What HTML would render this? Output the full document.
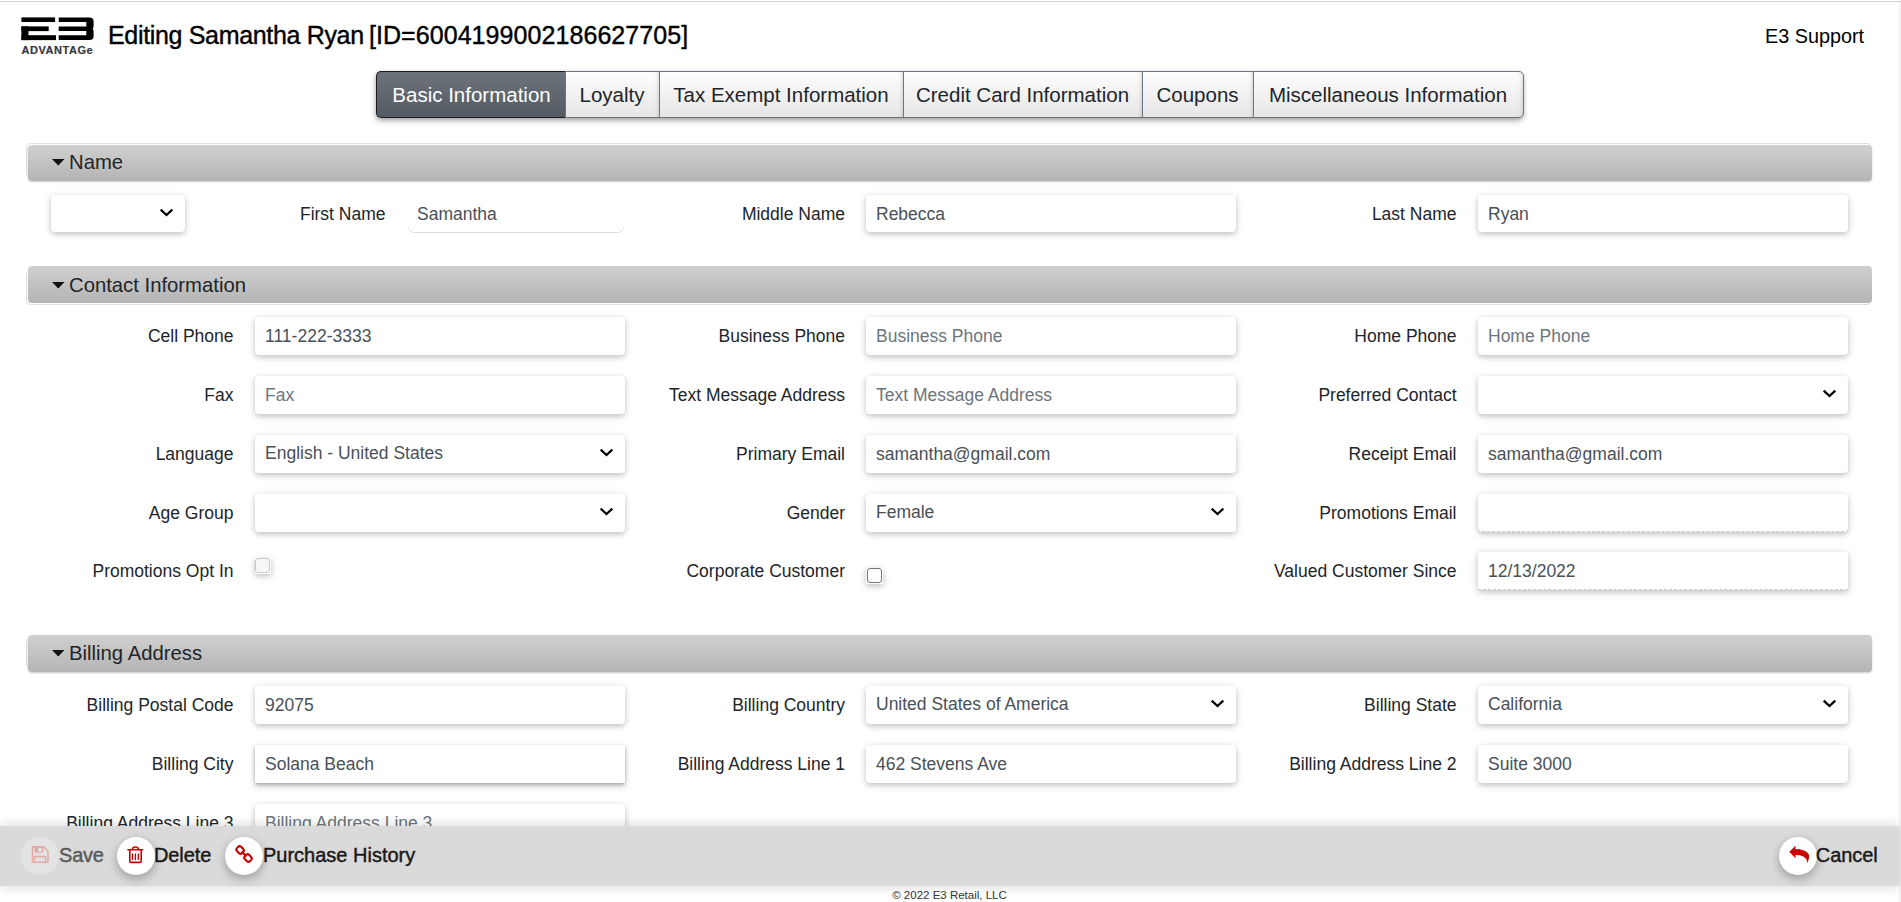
<!DOCTYPE html>
<html><head><meta charset="utf-8"><style>
*{box-sizing:border-box;margin:0;padding:0}
html,body{width:1901px;height:902px;overflow:hidden;background:#fff;font-family:"Liberation Sans", sans-serif}
.t{position:absolute;white-space:nowrap}
.abs{position:absolute}
.hdr{position:absolute;left:28px;width:1844px;border-radius:4px;
 background:linear-gradient(#d0d0d0,#b4b4b4);box-shadow:0 1px 2px rgba(0,0,0,.22)}
.inp{position:absolute;height:38px;width:370px;background:#fff;border-radius:4px;
 box-shadow:0 2px 5px 0 rgba(0,0,0,.16),0 2px 10px 0 rgba(0,0,0,.12)}
.chev{position:absolute;width:14px;height:9px}
.circ{position:absolute;width:38px;height:38px;border-radius:50%;background:#fff;
 box-shadow:0 4px 8px 0 rgba(0,0,0,.18),0 3px 12px 0 rgba(0,0,0,.12)}
</style></head>
<body>
<div class="abs" style="left:0;top:1px;width:1901px;height:1px;background:#cfd1d1"></div>
<div class="abs" style="left:1899px;top:2px;width:2px;height:900px;background:#f1f1f1"></div>
<svg class="abs" style="left:0;top:0" width="100" height="60" viewBox="0 0 100 60">
<g fill="#000">
<rect x="21.4" y="17.4" width="33.7" height="4.6"/>
<rect x="21.4" y="26.4" width="27.3" height="4.7"/>
<rect x="21.4" y="26.4" width="7.1" height="13.7"/>
<rect x="21.4" y="35.2" width="34.6" height="4.9"/>
<path d="M58.7 17.4 H89.6 Q93.6 17.4 93.6 21.4 V25.5 Q93.6 28.5 92.6 28.7 Q93.6 29 93.6 32 V36.1 Q93.6 40.1 89.6 40.1 H58.7 V35.2 H86.3 V31.1 H58.7 V26.4 H86.3 V22 H58.7 Z"/>
</g></svg>
<div class="t" style="left:21.5px;top:44.69px;font-size:11px;line-height:11px;color:#383838;font-weight:700;letter-spacing:0.55px;-webkit-text-stroke:0.2px #383838;">ADVANTAG<span style="font-size:11px">e</span></div>
<div class="t" style="left:108px;top:23.24px;font-size:25px;line-height:25px;color:#000;font-weight:400;letter-spacing:0px;-webkit-text-stroke:0.4px #000;"><span style="letter-spacing:-0.33px">Editing Samantha Ryan</span> <span style="letter-spacing:0.07px;margin-left:-1.8px">[ID=6004199002186627705]</span></div>
<div class="t" style="right:37px;top:27.24px;font-size:19.8px;line-height:19.8px;color:#000;font-weight:400;letter-spacing:0px;">E3 Support</div>
<div class="abs" style="left:376px;top:71px;width:1147px;height:47px;border-radius:5px;box-shadow:0 2px 5px rgba(0,0,0,.33),0 4px 9px rgba(0,0,0,.1)"></div>
<div class="abs" style="left:376px;top:71px;width:190px;height:47px;background:linear-gradient(#6c737a,#535a61);border:1.5px solid #1c1c1c;border-right:none;border-radius:5px 0 0 5px"></div>
<div class="abs" style="left:565px;top:71px;width:94px;height:47px;background:linear-gradient(#fdfdfd,#e6e6e6);border-top:1px solid #6c757d;border-bottom:1px solid #6c757d;border-left:1px solid #6c757d;border-radius:0;box-shadow:inset -4px 0 5px -4px rgba(0,0,0,.2)"></div>
<div class="abs" style="left:659px;top:71px;width:244px;height:47px;background:linear-gradient(#fdfdfd,#e6e6e6);border-top:1px solid #6c757d;border-bottom:1px solid #6c757d;border-left:1px solid #6c757d;border-radius:0;box-shadow:inset -4px 0 5px -4px rgba(0,0,0,.2)"></div>
<div class="abs" style="left:903px;top:71px;width:239px;height:47px;background:linear-gradient(#fdfdfd,#e6e6e6);border-top:1px solid #6c757d;border-bottom:1px solid #6c757d;border-left:1px solid #6c757d;border-radius:0;box-shadow:inset -4px 0 5px -4px rgba(0,0,0,.2)"></div>
<div class="abs" style="left:1142px;top:71px;width:111px;height:47px;background:linear-gradient(#fdfdfd,#e6e6e6);border-top:1px solid #6c757d;border-bottom:1px solid #6c757d;border-left:1px solid #6c757d;border-radius:0;box-shadow:inset -4px 0 5px -4px rgba(0,0,0,.2)"></div>
<div class="abs" style="left:1253px;top:71px;width:271px;height:47px;background:linear-gradient(#fdfdfd,#e6e6e6);border-top:1px solid #6c757d;border-bottom:1px solid #6c757d;border-left:1px solid #6c757d;border-right:1px solid #6c757d;border-radius:0 5px 5px 0;box-shadow:inset -4px 0 5px -4px rgba(0,0,0,.2)"></div>
<div class="t" style="left:377px;width:189px;text-align:center;top:85.37px;font-size:20.5px;line-height:20px;color:#fff">Basic Information</div>
<div class="t" style="left:565px;width:94px;text-align:center;top:85.37px;font-size:20.5px;line-height:20px;color:#212529">Loyalty</div>
<div class="t" style="left:659px;width:244px;text-align:center;top:85.37px;font-size:20.5px;line-height:20px;color:#212529">Tax Exempt Information</div>
<div class="t" style="left:903px;width:239px;text-align:center;top:85.37px;font-size:20.5px;line-height:20px;color:#212529">Credit Card Information</div>
<div class="t" style="left:1142px;width:111px;text-align:center;top:85.37px;font-size:20.5px;line-height:20px;color:#212529">Coupons</div>
<div class="t" style="left:1253px;width:270px;text-align:center;top:85.37px;font-size:20.5px;line-height:20px;color:#212529">Miscellaneous Information</div>
<div class="abs" style="left:26px;top:143px;width:1846px;height:35px;border-radius:5px;border-left:1px solid #dedede;border-top:1px solid #dedede;background:#fff"></div>
<div class="hdr" style="top:145px;height:36px;"></div>
<svg class="abs" style="left:52px;top:159px" width="13" height="7" viewBox="0 0 13 7"><path d="M0 0H12.5L6.25 6.5Z" fill="#111"/></svg>
<div class="t" style="left:69px;top:151.82px;font-size:20.3px;line-height:20.3px;color:#212529;font-weight:400;letter-spacing:0px;">Name</div>
<div class="abs" style="left:26px;top:269px;width:1846px;height:36px;border-radius:5px;border-left:1px solid #dedede;border-bottom:1px solid #dedede;background:#fff"></div>
<div class="hdr" style="top:266px;height:37px;box-shadow:none;"></div>
<svg class="abs" style="left:52px;top:282px" width="13" height="7" viewBox="0 0 13 7"><path d="M0 0H12.5L6.25 6.5Z" fill="#111"/></svg>
<div class="t" style="left:69px;top:274.82px;font-size:20.3px;line-height:20.3px;color:#212529;font-weight:400;letter-spacing:0px;">Contact Information</div>
<div class="abs" style="left:26px;top:638px;width:1846px;height:31px;border-radius:5px;border-left:1px solid #dedede;background:#fff"></div>
<div class="hdr" style="top:635px;height:37px;"></div>
<svg class="abs" style="left:52px;top:650px" width="13" height="7" viewBox="0 0 13 7"><path d="M0 0H12.5L6.25 6.5Z" fill="#111"/></svg>
<div class="t" style="left:69px;top:642.82px;font-size:20.3px;line-height:20.3px;color:#212529;font-weight:400;letter-spacing:0px;">Billing Address</div>
<div class="inp" style="left:51px;top:195px;width:134px;height:37px"></div>
<svg class="abs" style="left:158px;top:205px" width="18" height="16" viewBox="0 0 18 16"><path d="M2.7 4.7L8.5 10.0L14.3 4.7" fill="none" stroke="#000" stroke-width="2.3" stroke-linecap="butt" stroke-linejoin="miter"/></svg>
<div class="t" style="right:1515.5px;top:206.19px;font-size:17.5px;line-height:17.5px;color:#212529;font-weight:400;letter-spacing:0px;">First Name</div>
<div class="abs" style="left:408px;top:195px;width:216px;height:37px;border-radius:6px;box-shadow:0 1px 0 #dcdcdc"></div>
<div class="t" style="left:417px;top:206.19px;font-size:17.5px;line-height:17.5px;color:#495057;font-weight:400;letter-spacing:0px;">Samantha</div>
<div class="t" style="right:1056px;top:206.19px;font-size:17.5px;line-height:17.5px;color:#212529;font-weight:400;letter-spacing:0px;">Middle Name</div>
<div class="inp" style="left:866px;top:195px;height:37px;"></div>
<div class="t" style="left:876px;top:206.19px;font-size:17.5px;line-height:17.5px;color:#495057;font-weight:400;letter-spacing:0px;">Rebecca</div>
<div class="t" style="right:444.5px;top:206.19px;font-size:17.5px;line-height:17.5px;color:#212529;font-weight:400;letter-spacing:0px;">Last Name</div>
<div class="inp" style="left:1478px;top:195px;height:37px;"></div>
<div class="t" style="left:1488px;top:206.19px;font-size:17.5px;line-height:17.5px;color:#495057;font-weight:400;letter-spacing:0px;">Ryan</div>
<div class="t" style="right:1667.5px;top:328.19px;font-size:17.5px;line-height:17.5px;color:#212529;font-weight:400;letter-spacing:0px;">Cell Phone</div>
<div class="inp" style="left:255px;top:317px;height:38px;"></div>
<div class="t" style="left:265px;top:328.19px;font-size:17.5px;line-height:17.5px;color:#495057;font-weight:400;letter-spacing:0px;">111-222-3333</div>
<div class="t" style="right:1056px;top:328.19px;font-size:17.5px;line-height:17.5px;color:#212529;font-weight:400;letter-spacing:0px;">Business Phone</div>
<div class="inp" style="left:866px;top:317px;height:38px;"></div>
<div class="t" style="left:876px;top:328.19px;font-size:17.5px;line-height:17.5px;color:#6c757d;font-weight:400;letter-spacing:0px;">Business Phone</div>
<div class="t" style="right:444.5px;top:328.19px;font-size:17.5px;line-height:17.5px;color:#212529;font-weight:400;letter-spacing:0px;">Home Phone</div>
<div class="inp" style="left:1478px;top:317px;height:38px;"></div>
<div class="t" style="left:1488px;top:328.19px;font-size:17.5px;line-height:17.5px;color:#6c757d;font-weight:400;letter-spacing:0px;">Home Phone</div>
<div class="t" style="right:1667.5px;top:387.19px;font-size:17.5px;line-height:17.5px;color:#212529;font-weight:400;letter-spacing:0px;">Fax</div>
<div class="inp" style="left:255px;top:376px;height:38px;"></div>
<div class="t" style="left:265px;top:387.19px;font-size:17.5px;line-height:17.5px;color:#6c757d;font-weight:400;letter-spacing:0px;">Fax</div>
<div class="t" style="right:1056px;top:387.19px;font-size:17.5px;line-height:17.5px;color:#212529;font-weight:400;letter-spacing:0px;">Text Message Address</div>
<div class="inp" style="left:866px;top:376px;height:38px;"></div>
<div class="t" style="left:876px;top:387.19px;font-size:17.5px;line-height:17.5px;color:#6c757d;font-weight:400;letter-spacing:0px;">Text Message Address</div>
<div class="t" style="right:444.5px;top:387.19px;font-size:17.5px;line-height:17.5px;color:#212529;font-weight:400;letter-spacing:0px;">Preferred Contact</div>
<div class="inp" style="left:1478px;top:376px;height:38px;"></div>
<svg class="abs" style="left:1821px;top:386px" width="18" height="16" viewBox="0 0 18 16"><path d="M2.7 4.7L8.5 10.0L14.3 4.7" fill="none" stroke="#000" stroke-width="2.3" stroke-linecap="butt" stroke-linejoin="miter"/></svg>
<div class="t" style="right:1667.5px;top:446.19px;font-size:17.5px;line-height:17.5px;color:#212529;font-weight:400;letter-spacing:0px;">Language</div>
<div class="inp" style="left:255px;top:435px;height:38px;"></div>
<div class="t" style="left:265px;top:445.19px;font-size:17.5px;line-height:17.5px;color:#495057;font-weight:400;letter-spacing:0px;">English - United States</div>
<svg class="abs" style="left:598px;top:445px" width="18" height="16" viewBox="0 0 18 16"><path d="M2.7 4.7L8.5 10.0L14.3 4.7" fill="none" stroke="#000" stroke-width="2.3" stroke-linecap="butt" stroke-linejoin="miter"/></svg>
<div class="t" style="right:1056px;top:446.19px;font-size:17.5px;line-height:17.5px;color:#212529;font-weight:400;letter-spacing:0px;">Primary Email</div>
<div class="inp" style="left:866px;top:435px;height:38px;"></div>
<div class="t" style="left:876px;top:446.19px;font-size:17.5px;line-height:17.5px;color:#495057;font-weight:400;letter-spacing:0px;">samantha@gmail.com</div>
<div class="t" style="right:444.5px;top:446.19px;font-size:17.5px;line-height:17.5px;color:#212529;font-weight:400;letter-spacing:0px;">Receipt Email</div>
<div class="inp" style="left:1478px;top:435px;height:38px;"></div>
<div class="t" style="left:1488px;top:446.19px;font-size:17.5px;line-height:17.5px;color:#495057;font-weight:400;letter-spacing:0px;">samantha@gmail.com</div>
<div class="t" style="right:1667.5px;top:505.19px;font-size:17.5px;line-height:17.5px;color:#212529;font-weight:400;letter-spacing:0px;">Age Group</div>
<div class="inp" style="left:255px;top:494px;height:38px;"></div>
<svg class="abs" style="left:598px;top:504px" width="18" height="16" viewBox="0 0 18 16"><path d="M2.7 4.7L8.5 10.0L14.3 4.7" fill="none" stroke="#000" stroke-width="2.3" stroke-linecap="butt" stroke-linejoin="miter"/></svg>
<div class="t" style="right:1056px;top:505.19px;font-size:17.5px;line-height:17.5px;color:#212529;font-weight:400;letter-spacing:0px;">Gender</div>
<div class="inp" style="left:866px;top:494px;height:38px;"></div>
<div class="t" style="left:876px;top:504.19px;font-size:17.5px;line-height:17.5px;color:#495057;font-weight:400;letter-spacing:0px;">Female</div>
<svg class="abs" style="left:1209px;top:504px" width="18" height="16" viewBox="0 0 18 16"><path d="M2.7 4.7L8.5 10.0L14.3 4.7" fill="none" stroke="#000" stroke-width="2.3" stroke-linecap="butt" stroke-linejoin="miter"/></svg>
<div class="t" style="right:444.5px;top:505.19px;font-size:17.5px;line-height:17.5px;color:#212529;font-weight:400;letter-spacing:0px;">Promotions Email</div>
<div class="inp" style="left:1478px;top:494px;height:38px;border-bottom:1px dashed #ccc;"></div>
<div class="t" style="right:1667.5px;top:563.19px;font-size:17.5px;line-height:17.5px;color:#212529;font-weight:400;letter-spacing:0px;">Promotions Opt In</div>
<div class="abs" style="left:255px;top:558px;width:16px;height:16px;background:#fff;box-shadow:0 2px 5px 0 rgba(0,0,0,.16),0 2px 10px 0 rgba(0,0,0,.12)"><div class="abs" style="left:0;top:0;width:15px;height:15px;border:1px solid #c6c6c6;border-radius:3px;background:#f6f6f6"></div></div>
<div class="t" style="right:1056px;top:563.19px;font-size:17.5px;line-height:17.5px;color:#212529;font-weight:400;letter-spacing:0px;">Corporate Customer</div>
<div class="abs" style="left:866px;top:568px;width:17px;height:16px;background:#fff;box-shadow:0 2px 5px 0 rgba(0,0,0,.16),0 2px 10px 0 rgba(0,0,0,.12)"><div class="abs" style="left:1px;top:0;width:15px;height:15px;border:1.3px solid #777;border-radius:3px;background:#fff"></div></div>
<div class="t" style="right:444.5px;top:563.19px;font-size:17.5px;line-height:17.5px;color:#212529;font-weight:400;letter-spacing:0px;">Valued Customer Since</div>
<div class="inp" style="left:1478px;top:552px;height:38px;border-bottom:1px dashed #ccc;border-radius:0;"></div>
<div class="t" style="left:1488px;top:563.19px;font-size:17.5px;line-height:17.5px;color:#495057;font-weight:400;letter-spacing:0px;">12/13/2022</div>
<div class="t" style="right:1667.5px;top:697.19px;font-size:17.5px;line-height:17.5px;color:#212529;font-weight:400;letter-spacing:0px;">Billing Postal Code</div>
<div class="inp" style="left:255px;top:686px;height:38px;"></div>
<div class="t" style="left:265px;top:697.19px;font-size:17.5px;line-height:17.5px;color:#495057;font-weight:400;letter-spacing:0px;">92075</div>
<div class="t" style="right:1056px;top:697.19px;font-size:17.5px;line-height:17.5px;color:#212529;font-weight:400;letter-spacing:0px;">Billing Country</div>
<div class="inp" style="left:866px;top:686px;height:38px;"></div>
<div class="t" style="left:876px;top:696.19px;font-size:17.5px;line-height:17.5px;color:#495057;font-weight:400;letter-spacing:0px;">United States of America</div>
<svg class="abs" style="left:1209px;top:696px" width="18" height="16" viewBox="0 0 18 16"><path d="M2.7 4.7L8.5 10.0L14.3 4.7" fill="none" stroke="#000" stroke-width="2.3" stroke-linecap="butt" stroke-linejoin="miter"/></svg>
<div class="t" style="right:444.5px;top:697.19px;font-size:17.5px;line-height:17.5px;color:#212529;font-weight:400;letter-spacing:0px;">Billing State</div>
<div class="inp" style="left:1478px;top:686px;height:38px;"></div>
<div class="t" style="left:1488px;top:696.19px;font-size:17.5px;line-height:17.5px;color:#495057;font-weight:400;letter-spacing:0px;">California</div>
<svg class="abs" style="left:1821px;top:696px" width="18" height="16" viewBox="0 0 18 16"><path d="M2.7 4.7L8.5 10.0L14.3 4.7" fill="none" stroke="#000" stroke-width="2.3" stroke-linecap="butt" stroke-linejoin="miter"/></svg>
<div class="t" style="right:1667.5px;top:756.19px;font-size:17.5px;line-height:17.5px;color:#212529;font-weight:400;letter-spacing:0px;">Billing City</div>
<div class="inp" style="left:255px;top:745px;height:38px;border-radius:0;box-shadow:0 3px 6px 0 rgba(0,0,0,.25),0 1px 3px rgba(0,0,0,.2);"></div>
<div class="t" style="left:265px;top:756.19px;font-size:17.5px;line-height:17.5px;color:#495057;font-weight:400;letter-spacing:0px;">Solana Beach</div>
<div class="t" style="right:1056px;top:756.19px;font-size:17.5px;line-height:17.5px;color:#212529;font-weight:400;letter-spacing:0px;">Billing Address Line 1</div>
<div class="inp" style="left:866px;top:745px;height:38px;"></div>
<div class="t" style="left:876px;top:756.19px;font-size:17.5px;line-height:17.5px;color:#495057;font-weight:400;letter-spacing:0px;">462 Stevens Ave</div>
<div class="t" style="right:444.5px;top:756.19px;font-size:17.5px;line-height:17.5px;color:#212529;font-weight:400;letter-spacing:0px;">Billing Address Line 2</div>
<div class="inp" style="left:1478px;top:745px;height:38px;"></div>
<div class="t" style="left:1488px;top:756.19px;font-size:17.5px;line-height:17.5px;color:#495057;font-weight:400;letter-spacing:0px;">Suite 3000</div>
<div class="t" style="right:1667.5px;top:815.19px;font-size:17.5px;line-height:17.5px;color:#212529;font-weight:400;letter-spacing:0px;">Billing Address Line 3</div>
<div class="inp" style="left:255px;top:804px;height:38px;"></div>
<div class="t" style="left:265px;top:815.19px;font-size:17.5px;line-height:17.5px;color:#6c757d;font-weight:400;letter-spacing:0px;">Billing Address Line 3</div>
<div class="abs" style="left:0;top:826px;width:1899px;height:60px;background:#dadada;box-shadow:0 0 12px rgba(0,0,0,.18)"></div>
<div class="circ" style="left:21px;top:837px;background:#e3e3e3;box-shadow:none"></div>
<svg class="abs" style="left:25px;top:840px" width="30" height="30" viewBox="0 0 30 30"><g fill="none" stroke="#e2a9a9" stroke-width="1.5"><path d="M7.5 6.8H18.5L23 11.3V21.6Q23 22.3 22.3 22.3H8.2Q7.5 22.3 7.5 21.6Z"/><path d="M9.4 22.3V17.2Q9.4 16.4 10.2 16.4H19.8Q20.6 16.4 20.6 17.2V22.3"/></g><rect x="9.6" y="6.8" width="8.6" height="5.9" fill="#e2a9a9"/><rect x="13.3" y="7.8" width="3.4" height="3.9" fill="#e4e4e4"/></svg>
<div class="t" style="left:59px;top:845.07px;font-size:20px;line-height:20px;color:#5a5a5a;font-weight:400;letter-spacing:-0.2px;-webkit-text-stroke:0.45px #5a5a5a;">Save</div>
<div class="circ" style="left:117px;top:837px"></div>
<svg class="abs" style="left:120px;top:840px" width="30" height="30" viewBox="0 0 30 30"><g fill="none" stroke="#cc0000" stroke-width="1.6" stroke-linecap="round"><path d="M7.9 9.8H22.6"/><path d="M12.3 9.6Q12.6 7 15.4 7Q18.2 7 18.6 9.6"/><path d="M9.8 10.4V21.3Q9.8 22.4 10.9 22.4H20.1Q21.2 22.4 21.2 21.3V10.4"/><path d="M12.5 13.9V19.4M15.4 13.9V19.4M18.3 13.9V19.4" stroke-width="1.3"/></g></svg>
<div class="t" style="left:154px;top:845.07px;font-size:20px;line-height:20px;color:#1a1a1a;font-weight:400;letter-spacing:-0.1px;-webkit-text-stroke:0.45px #1a1a1a;">Delete</div>
<div class="circ" style="left:225px;top:837px"></div>
<svg class="abs" style="left:229px;top:840px" width="30" height="30" viewBox="0 0 30 30"><g fill="none" stroke="#cc0000" stroke-width="2.1"><rect x="7.5" y="7" width="7.2" height="6" rx="2.4" transform="rotate(45 11.1 10)"/><rect x="15.4" y="15" width="7.2" height="6" rx="2.4" transform="rotate(45 19 18)"/><path d="M12.6 11.5L17.5 16.4"/></g></svg>
<div class="t" style="left:263px;top:845.07px;font-size:20px;line-height:20px;color:#1a1a1a;font-weight:400;letter-spacing:0px;-webkit-text-stroke:0.45px #1a1a1a;">Purchase History</div>
<div class="circ" style="left:1779px;top:837px"></div>
<svg class="abs" style="left:1787.5px;top:845px" width="24" height="20" viewBox="0 0 24 20"><path d="M1.3 6.8L7.5 0.8V4Q16.5 4 20.3 8.6Q22.3 11.6 19.4 18.2Q19.3 13.6 15.2 11.4Q12.5 10 7.5 10V13.2Z" fill="#cc0000"/></svg>
<div class="t" style="right:23.5px;top:845.07px;font-size:20px;line-height:20px;color:#1a1a1a;font-weight:400;letter-spacing:-0.1px;-webkit-text-stroke:0.45px #1a1a1a;">Cancel</div>
<div class="t" style="left:949.5px;top:890.27px;font-size:11.5px;line-height:11.5px;color:#333;font-weight:400;letter-spacing:0px;transform:translateX(-50%);">© 2022 E3 Retail, LLC</div>
</body></html>
